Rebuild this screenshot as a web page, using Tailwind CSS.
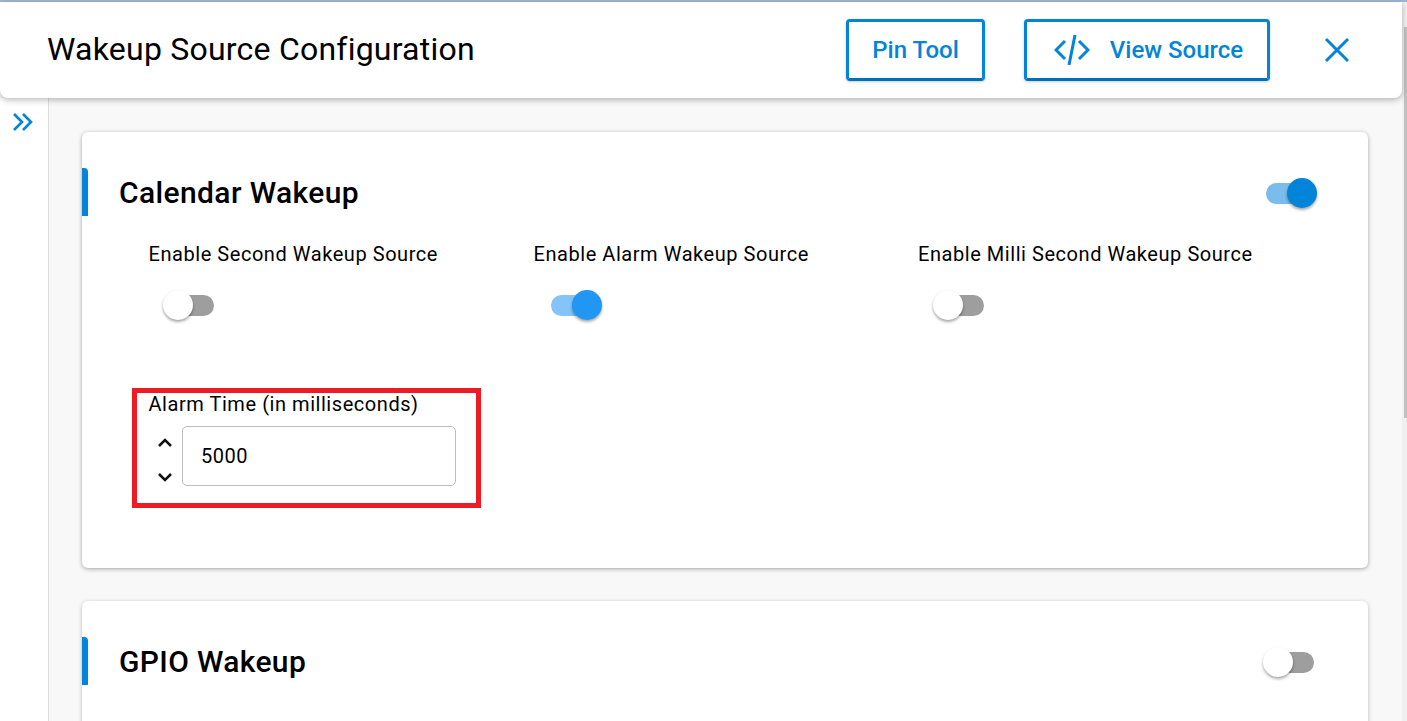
<!DOCTYPE html>
<html>
<head>
<meta charset="utf-8">
<script src="https://cdn.jsdelivr.net/npm/@tailwindcss/browser@4"></script>
<title>Wakeup Source Configuration</title>
</head>
<body class="m-0 h-[721px] w-[1407px] overflow-hidden bg-[#f8f8f8] font-['Roboto',sans-serif] text-black">
<div class="relative flex h-[721px] w-[1407px] flex-col overflow-hidden">
  <div class="h-[2px] w-full shrink-0 bg-[#9db7d3]"></div>
  <div class="relative z-10 flex h-[96px] w-[1402px] shrink-0 items-center rounded-b-[8px] bg-white pl-[47px] shadow-[0_2px_6px_rgba(0,0,0,0.28)]">
    <h1 class="pb-[2px] text-[32px] font-normal leading-[36px] tracking-[0.22px]">Wakeup Source Configuration</h1>
    <div class="ml-auto flex items-center">
      <button class="flex h-[62px] w-[139px] items-center justify-center rounded-[4px] border-[3px] border-[#0284d8] border-b-[#0070b8] bg-white text-[24px] font-medium text-[#0284d8] shadow-[0_1px_3px_rgba(0,0,0,0.2)]">Pin Tool</button>
      <button class="ml-[39px] flex h-[62px] w-[246px] items-center justify-center gap-[20px] rounded-[4px] border-[3px] border-[#0284d8] border-b-[#0070b8] bg-white pl-[3px] text-[24px] font-medium text-[#0284d8] shadow-[0_1px_3px_rgba(0,0,0,0.2)]">
        <svg width="36" height="32" viewBox="0 0 36 32" fill="none" stroke="#0284d8" stroke-width="3"><path d="M11 7 L2 16 L11 25"/><path d="M25 7 L34 16 L25 25"/><path d="M21 1 L15 31"/></svg>
        <span>View Source</span>
      </button>
      <button class="ml-[53px] mr-[51px] flex h-[28px] w-[28px] items-center justify-center">
        <svg width="26" height="26" viewBox="0 0 26 26" fill="none" stroke="#0284d8" stroke-width="3"><path d="M2 2 L24 24 M24 2 L2 24"/></svg>
      </button>
    </div>
  </div>
  <div class="flex min-h-0 flex-1">
    <aside class="w-[49px] shrink-0 border-r border-[#dddddd] bg-white pl-[12px] pt-[14px]">
      <svg class="block" width="22" height="20" viewBox="0 0 22 20" fill="none" stroke="#0284d8" stroke-width="2.6"><path d="M2 2 L10 10 L2 18"/><path d="M11 2 L19 10 L11 18"/></svg>
    </aside>
    <main class="flex min-w-0 flex-1 flex-col gap-[33px] pl-[33px] pr-[39px] pt-[34px]">
      <section class="relative h-[436px] shrink-0 rounded-[6px] bg-white shadow-[0_1px_4px_rgba(0,0,0,0.35)]">
        <span class="absolute left-0 top-[36px] h-[48px] w-[6px] rounded-tr-[4px] bg-[#0284d8]"></span>
        <div class="flex h-[110px] items-center pb-[32px] pl-[37px] pr-[54px] pt-[44px]">
          <h2 class="text-[30px] font-[475] leading-[34px] tracking-[0.38px]">Calendar Wakeup</h2>
          <div class="relative ml-auto h-[21px] w-[48px] rounded-full bg-[#7abdec]">
            <span class="absolute right-[-3px] top-[-5px] h-[30px] w-[30px] rounded-full bg-[#0284d8] shadow-[0_2px_3px_rgba(0,0,0,0.35)]"></span>
          </div>
        </div>
        <div class="grid grid-cols-[385px_384.5px_1fr] pl-[66.5px] tracking-[0.55px]">
          <div>
            <div class="text-[20px] leading-[24px]">Enable Second Wakeup Source</div>
            <div class="relative ml-[17.5px] mt-[29px] h-[21px] w-[48px] rounded-full bg-[#9e9e9e]"><span class="absolute left-[-3px] top-[-5px] h-[30px] w-[30px] rounded-full bg-white shadow-[0_2px_3px_rgba(0,0,0,0.35)]"></span></div>
          </div>
          <div>
            <div class="text-[20px] leading-[24px]">Enable Alarm Wakeup Source</div>
            <div class="relative ml-[17.5px] mt-[29px] h-[21px] w-[48px] rounded-full bg-[#85c4f8]"><span class="absolute right-[-3px] top-[-5px] h-[30px] w-[30px] rounded-full bg-[#2196f3] shadow-[0_2px_3px_rgba(0,0,0,0.35)]"></span></div>
          </div>
          <div>
            <div class="text-[20px] leading-[24px]">Enable Milli Second Wakeup Source</div>
            <div class="relative ml-[18px] mt-[29px] h-[21px] w-[48px] rounded-full bg-[#9e9e9e]"><span class="absolute left-[-3px] top-[-5px] h-[30px] w-[30px] rounded-full bg-white shadow-[0_2px_3px_rgba(0,0,0,0.35)]"></span></div>
          </div>
        </div>
        <div class="ml-[50px] mt-[72px] h-[120px] w-[349px] border-[5px] border-[#ed1c24] pl-[11px] tracking-[0.55px]">
          <div class="-mt-[1px] pl-[0.5px] text-[20px] leading-[24px]">Alarm Time (in milliseconds)</div>
          <div class="mt-[10px] flex items-center">
            <div class="flex h-[60px] w-[34px] flex-col items-start justify-between pb-[4px] pl-[10px] pt-[12px]">
              <svg width="14" height="9" viewBox="0 0 14 9" fill="none" stroke="#111" stroke-width="2.5"><path d="M1 8 L7 2 L13 8"/></svg>
              <svg width="14" height="9" viewBox="0 0 14 9" fill="none" stroke="#111" stroke-width="2.5"><path d="M1 1 L7 7 L13 1"/></svg>
            </div>
            <div class="flex h-[60px] w-[274px] items-center rounded-[5px] border border-[#bdbdbd] bg-white pl-[18px] text-[20px]">5000</div>
          </div>
        </div>
      </section>
      <section class="relative h-[300px] shrink-0 rounded-[6px] bg-white shadow-[0_1px_4px_rgba(0,0,0,0.25)]">
        <span class="absolute left-0 top-[36px] h-[48px] w-[6px] rounded-tr-[4px] bg-[#0284d8]"></span>
        <div class="flex h-[122px] items-center pl-[37px] pr-[54px]">
          <h2 class="text-[30px] font-[475] leading-[34px] tracking-[0.35px]">GPIO Wakeup</h2>
          <div class="relative ml-auto h-[21px] w-[48px] rounded-full bg-[#9e9e9e]"><span class="absolute left-[-3px] top-[-5px] h-[30px] w-[30px] rounded-full bg-white shadow-[0_2px_3px_rgba(0,0,0,0.35)]"></span></div>
        </div>
      </section>
    </main>
  </div>
  <div class="absolute bottom-0 right-0 top-[2px] w-[5px] bg-[#f0f0f0]"></div>
  <div class="absolute right-0 top-[27px] h-[391px] w-[3px] bg-[#c1c1c1]"></div>
</div>
</body>
</html>
